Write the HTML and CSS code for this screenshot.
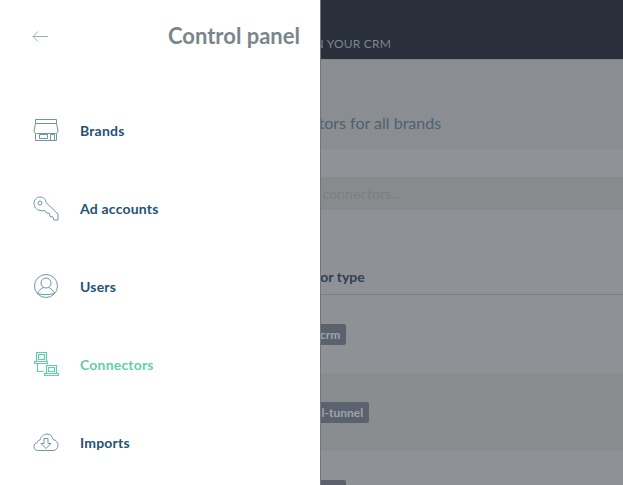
FILE: index.html
```html
<!DOCTYPE html>
<html lang="en">
<head>
  <meta charset="UTF-8" />
  <meta name="viewport" content="width=device-width, initial-scale=1.0"/>
  <title>Connectors</title>
  <link rel="stylesheet" href="styles.css">
</head>
<body>
  <div class="page">
    <header class="topbar">
      <span class="topbar-link">IN YOUR CRM</span>
    </header>
    <div class="title-band">
      <h1 class="title">Connectors for all brands</h1>
    </div>
    <div class="gap-band"></div>
    <div class="search-band">
      <span class="search-text">Search connectors...</span>
    </div>
    <div class="table-head">
      <span class="col-name">Connector type</span>
    </div>
    <div class="row"><span class="tag tag-crm">crm</span></div>
    <div class="row row-alt"><span class="tag tag-tunnel">ssl-tunnel</span></div>
    <div class="row"><span class="tag tag-crm">crm</span></div>
  </div>

  <!-- drawer lies over the page -->
  <aside class="drawer">
    <div class="drawer-head">
      <svg class="back" width="16" height="12" viewBox="0 0 16 12">
        <path d="M16 6.500H1M6 1.500l-5 5 5 5" />
      </svg>
      <h2 class="drawer-title">Control panel</h2>
    </div>
    <nav class="menu">
      <a class="menu-item">
        <svg class="icon" width="26" height="26" viewBox="0 0 26 26">
          <path d="M2.500 2.500h21v4h-21z" />
          <path d="M2.500 6.500L1 14c0 1.500 1 2.500 2.500 2.500h19c1.500 0 2.500-1 2.500-2.500l-1.500-7.500" />
          <path d="M2.500 16.500v7h21v-7M17.500 23.500v-6h4v6M6.500 17.500h8v4h-8z" />
        </svg>
        <span>Brands</span>
      </a>
      <a class="menu-item">
        <svg class="icon" width="26" height="26" viewBox="0 0 26 26">
          <path d="M7 2c3.500 0 6 2.500 6 5.500L25 19v6h-4l-1-3-3-.5-.5-3-3-.5-1.500-2.500C10.500 16 9 16 7 15.500 3.500 15 1 12 1 8.500 1 5 3.500 2 7 2z" />
          <circle cx="7" cy="8" r="2" />
        </svg>
        <span>Ad accounts</span>
      </a>
      <a class="menu-item">
        <svg class="icon" width="26" height="26" viewBox="0 0 26 26">
          <circle cx="13" cy="13" r="11.500" />
          <circle cx="13" cy="10" r="5" />
          <path d="M4.500 20.500c1-3 3.500-5 6-6M21.500 20.500c-1-3-3.500-5-6-6M4.500 20.500c5 1.500 12 1.500 17 0" />
        </svg>
        <span>Users</span>
      </a>
      <a class="menu-item is-active">
        <svg class="icon" width="26" height="26" viewBox="0 0 26 26">
          <path d="M3.500 1.500h10v9h-10zM5.500 3.500h6v5h-6zM1.500 10.500h13v2h-13z" />
          <path d="M4.500 12.500v8h6" />
          <path d="M13.500 14.500h10v8h-10zM15.500 16.500h6v4h-6zM11.500 22.500h14v2h-14z" />
        </svg>
        <span>Connectors</span>
      </a>
      <a class="menu-item">
        <svg class="icon" width="26" height="26" viewBox="0 0 26 26">
          <path d="M5.500 21.500H5c-2.500 0-4-1.500-4-4s1.500-3.500 3.500-4c0-1.500 1-2.500 2.500-2.500C8 7.500 10.500 5 14 5c3.500 0 5.500 2.500 6 5.500 3 .5 5 3 5 5.500 0 3-2 5.500-5 5.500H5.500z" />
          <path d="M11 9.500h4v5h3l-5 5-5-5h3z" />
        </svg>
        <span>Imports</span>
      </a>
    </nav>
  </aside>
</body>
</html>
```

FILE: styles.css
```css
* {
  box-sizing: border-box;
}

html, body {
  height: 100%;
}

body {
  margin: 0;
  font-family: 'Lato', sans-serif;
  background: #8e9195;
  overflow: hidden;
  position: relative;
}

/* page behind the drawer */
.page {
  height: 100%;
  overflow: hidden;
}

.topbar {
  height: 59px;
  background: #2a303b;
  display: flex;
  align-items: flex-end;
  padding: 0 0 8px 311px;
}

.topbar-link {
  color: #7d858d;
  font-size: 12px;
  font-weight: 400;
  letter-spacing: 0.2px;
  white-space: nowrap;
  line-height: 15px;
}

.title-band {
  height: 90px;
  background: #8a8d91;
  border-top: 1px solid #808387;
  padding: 53px 0 0 265px;
}

.title {
  margin: 0;
  font-size: 16px;
  font-weight: 400;
  line-height: 20px;
  color: #4f6070;
  white-space: nowrap;
}

.gap-band {
  height: 28px;
  background: #8f9296;
}

.search-band {
  height: 33px;
  background: #888b8e;
  padding-left: 278px;
  line-height: 34px;
  font-size: 14px;
  color: #7b7e82;
  white-space: nowrap;
}

.table-head {
  height: 85px;
  background: #8e9195;
  border-bottom: 1px solid #7c7f83;
  padding: 58px 0 0 268px;
}

.col-name {
  font-size: 14px;
  font-weight: 700;
  line-height: 17px;
  color: #2c4153;
  display: block;
  white-space: nowrap;
}

.row {
  height: 78px;
  display: flex;
  align-items: center;
  background: #8e9195;
}

.row-alt {
  background: #8a8d90;
}

.tag {
  background: #5c626d;
  color: #9aa5ae;
  font-size: 12px;
  font-weight: 700;
  height: 21px;
  line-height: 21px;
  padding: 0 6px;
  border-radius: 2px;
  white-space: nowrap;
}

.tag-crm {
  margin-left: 314px;
}

.tag-tunnel {
  margin-left: 305px;
}

/* drawer */
.drawer {
  position: absolute;
  top: 0;
  left: 0;
  bottom: 0;
  width: 321px;
  background: #fff;
  border-right: 1px solid #73767a;
}

.drawer-head {
  height: 91px;
  display: flex;
  align-items: flex-start;
  justify-content: space-between;
  padding: 21px 20px 0 32px;
}

.back {
  margin-top: 9px;
  fill: none;
  stroke: #8fb0b8;
  stroke-width: 1;
}

.drawer-title {
  margin: 0;
  font-size: 22px;
  font-weight: 700;
  line-height: 30px;
  color: #7a868c;
  white-space: nowrap;
}

.menu-item {
  height: 78px;
  display: flex;
  align-items: center;
  gap: 21px;
  padding-left: 33px;
  font-size: 14px;
  font-weight: 700;
  letter-spacing: 0.2px;
  color: #1f5373;
}

.icon {
  flex: none;
  fill: none;
  stroke: #6f95a6;
  stroke-width: 1;
}

.is-active {
  color: #64cfa6;
}

.is-active .icon {
  stroke: #64cfa6;
  stroke-width: 1.2;
}
```
